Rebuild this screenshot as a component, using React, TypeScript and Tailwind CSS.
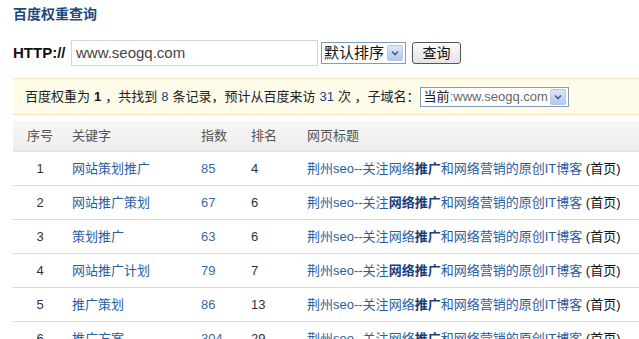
import { ReactNode } from 'react';

const cjk = "font-['Liberation_Sans','Noto_Sans_CJK_SC',sans-serif]";

interface Row {
  id: number;
  keyword: string;
  index: string;
  rank: string;
  boldBoth?: boolean;
}

const rows: Row[] = [
  { id: 1, keyword: '网站策划推广', index: '85', rank: '4' },
  { id: 2, keyword: '网站推广策划', index: '67', rank: '6', boldBoth: true },
  { id: 3, keyword: '策划推广', index: '63', rank: '6' },
  { id: 4, keyword: '网站推广计划', index: '79', rank: '7', boldBoth: true },
  { id: 5, keyword: '推广策划', index: '86', rank: '13' },
  { id: 6, keyword: '推广方案', index: '304', rank: '29' },
];

function Arrow() {
  return (
    <span className="flex h-[16px] w-[16px] items-center justify-center rounded-[2px] border border-[#b5c8e8] bg-gradient-to-b from-[#dbe6fb] to-[#b3c9f0]">
      <svg width="8" height="6" viewBox="0 0 8 6">
        <path d="M1 1.5 L4 4.5 L7 1.5" stroke="#4d6185" strokeWidth="1.6" fill="none" />
      </svg>
    </span>
  );
}

function PageTitle({ bold }: { bold: boolean }) {
  return (
    <span>
      荆州seo--关注
      {bold ? <b className="text-[#1c3e78]">网络推广</b> : <>网络<b className="text-[#1c3e78]">推广</b></>}
      和网络营销的原创IT博客 <span className="text-[#111]">(首页)</span>
    </span>
  );
}

function Cell({ className = '', children }: { className?: string; children: ReactNode }) {
  return <div className={`flex items-center ${className}`}>{children}</div>;
}

export default function App() {
  return (
    <div className={`h-[339px] w-[639px] overflow-hidden bg-white ${cjk}`}>
      <div className="pl-[13px] pt-[5px] text-[14px] font-bold leading-[18px] text-[#1d4a7c]">百度权重查询</div>

      <div className="mt-[17px] flex items-center pl-[13px]">
        <span className="w-[58px] text-[15px] font-bold text-[#111]">HTTP://</span>
        <div className="flex h-[26px] w-[247px] items-center border border-[#d4d4d4] pl-[4px] text-[15px] text-[#444]">
          www.seogq.com
        </div>
        <div className="ml-[3px] flex h-[22px] w-[85px] items-center justify-between border border-[#7f9db9] pl-[2px] pr-[2px] text-[15px] text-[#111]">
          默认排序
          <Arrow />
        </div>
        <button className="ml-[6px] h-[22px] w-[49px] rounded-[3px] border border-[#555] bg-gradient-to-b from-[#fafafa] to-[#e4e4e4] text-[14px] text-[#111]">
          查询
        </button>
      </div>

      <div className="ml-[13px] mt-[12px] flex h-[37px] items-center border-y border-[#f1e7b8] bg-[#fefbe8] pl-[12px] text-[13px] text-[#222]">
        百度权重为 <b className="mx-[4px] text-[#111]">1</b>，共找到 <span className="mx-[4px] text-[#1d3f8a]">8</span>条记录，预计从百度来访 <span className="mx-[4px] text-[#1d3f8a]">31</span>次 ，子域名：
        <div className="flex h-[20px] w-[149px] items-center justify-between border border-[#7f9db9] bg-white pl-[3px] pr-[2px] text-[13px]">
          <span>
            当前<span className="text-[#666]">:www.seogq.com</span>
          </span>
          <Arrow />
        </div>
      </div>

      <div className="ml-[13px] mt-[6px]">
        <div className="flex h-[31px] border-b border-[#e2e2e2] bg-gradient-to-b from-[#f7f7f7] to-[#ededed] text-[13px] text-[#555]">
          <Cell className="w-[54px] justify-center">序号</Cell>
          <Cell className="w-[129px] pl-[5px]">关键字</Cell>
          <Cell className="w-[50px] pl-[5px]">指数</Cell>
          <Cell className="w-[56px] pl-[5px]">排名</Cell>
          <Cell className="flex-1 pl-[5px]">网页标题</Cell>
        </div>
        {rows.map((r) => (
          <div key={r.id} className="flex h-[34px] border-b border-[#dcdcdc] text-[13px]">
            <Cell className="w-[54px] justify-center text-[#333]">{r.id}</Cell>
            <Cell className="w-[129px] pl-[5px] text-[#2a5d9f]">{r.keyword}</Cell>
            <Cell className="w-[50px] pl-[5px] text-[#3b6aa0]">{r.index}</Cell>
            <Cell className="w-[56px] pl-[5px] text-[#333]">{r.rank}</Cell>
            <Cell className="flex-1 whitespace-nowrap pl-[5px] text-[#2a5d9f]">
              <PageTitle bold={!!r.boldBoth} />
            </Cell>
          </div>
        ))}
      </div>
    </div>
  );
}
